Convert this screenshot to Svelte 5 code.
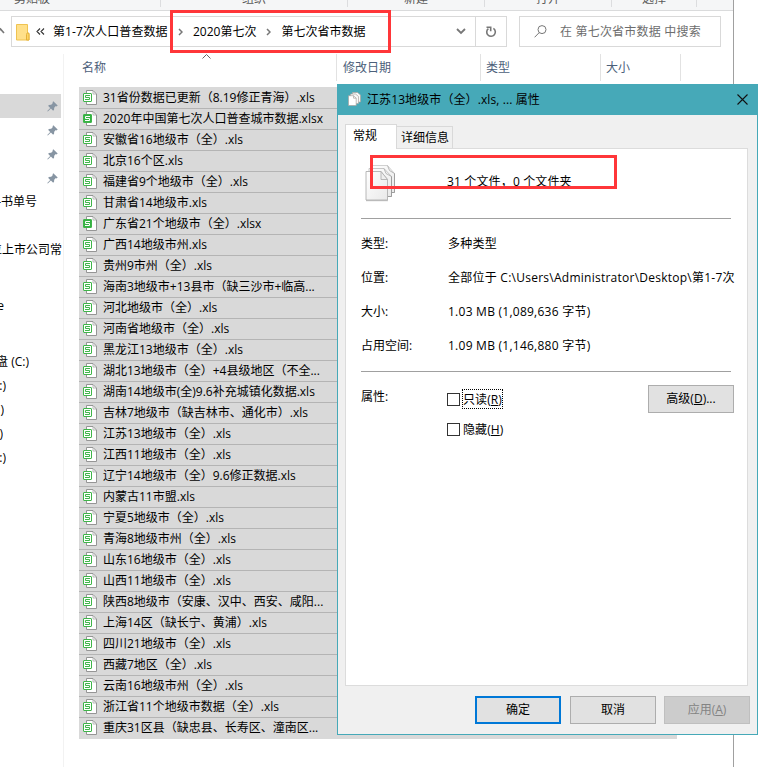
<script lang="ts">
  interface FileItem {
    name: string
    solid?: boolean
  }

  interface NavItem {
    text?: string
    end?: number
    pin?: boolean
    active?: boolean
  }

  const groups = [
    { label: '剪贴板', width: 161, shift: -96 },
    { label: '组织', width: 187, shift: 0 },
    { label: '新建', width: 137, shift: 0 },
    { label: '打开', width: 127, shift: 0 },
    { label: '选择', width: 85, shift: 0 },
  ]

  const navGroups: NavItem[][] = [
    [
      { pin: true, active: true },
      { pin: true },
      { pin: true },
      { pin: true },
      { text: '-书单号', end: 37 },
      {},
      { text: '位上市公司常', end: 62 },
      {},
    ],
    [{ text: 'e', end: 4 }, {}],
    [
      { text: '盘 (C:)', end: 29 },
      { text: ':)', end: 6 },
      { text: ')', end: 4 },
      { text: ')', end: 3 },
      { text: ':)', end: 6 },
    ],
  ]

  const files: FileItem[] = [
    { name: '31省份数据已更新（8.19修正青海）.xls' },
    { name: '2020年中国第七次人口普查城市数据.xlsx', solid: true },
    { name: '安徽省16地级市（全）.xls' },
    { name: '北京16个区.xls' },
    { name: '福建省9个地级市（全）.xls' },
    { name: '甘肃省14地级市.xls' },
    { name: '广东省21个地级市（全）.xlsx', solid: true },
    { name: '广西14地级市州.xls' },
    { name: '贵州9市州（全）.xls' },
    { name: '海南3地级市+13县市（缺三沙市+临高...' },
    { name: '河北地级市（全）.xls' },
    { name: '河南省地级市（全）.xls' },
    { name: '黑龙江13地级市（全）.xls' },
    { name: '湖北13地级市（全）+4县级地区（不全...' },
    { name: '湖南14地级市(全)9.6补充城镇化数据.xls' },
    { name: '吉林7地级市（缺吉林市、通化市）.xls' },
    { name: '江苏13地级市（全）.xls' },
    { name: '江西11地级市（全）.xls' },
    { name: '辽宁14地级市（全）9.6修正数据.xls' },
    { name: '内蒙古11市盟.xls' },
    { name: '宁夏5地级市（全）.xls' },
    { name: '青海8地级市州（全）.xls' },
    { name: '山东16地级市（全）.xls' },
    { name: '山西11地级市（全）.xls' },
    { name: '陕西8地级市（安康、汉中、西安、咸阳...' },
    { name: '上海14区（缺长宁、黄浦）.xls' },
    { name: '四川21地级市（全）.xls' },
    { name: '西藏7地区（全）.xls' },
    { name: '云南16地级市州（全）.xls' },
    { name: '浙江省11个地级市数据（全）.xls' },
    { name: '重庆31区县（缺忠县、长寿区、潼南区...' },
  ]

  const details = [
    { label: '类型:', value: '多种类型' },
    { label: '位置:', value: '全部位于 C:\\Users\\Administrator\\Desktop\\第1-7次' },
    { label: '大小:', value: '1.03 MB (1,089,636 字节)' },
    { label: '占用空间:', value: '1.09 MB (1,146,880 字节)' },
  ]
</script>

<div class="screen">
  <div class="explorer">
    <div class="ribbon">
      {#each groups as g (g.label)}
        <div class="ribbon-group" style="width: {g.width}px; padding-right: {-g.shift}px"><span>{g.label}</span></div>
      {/each}
    </div>

    <div class="toolbar">
      <svg class="up" width="5" height="8" viewBox="0 0 5 8"><path d="M-3 6 L0.5 2 L4 6" fill="none" stroke="#777" stroke-width="1.6" /></svg>
      <div class="address">
        <svg class="folder" width="14" height="18" viewBox="0 0 14 18">
          <path d="M0.5 1.5h11v8.5h1.5v7H0.5z" fill="#ffe08a" stroke="#efc351" />
          <path d="M10.5 17v-5.5q0-1.5 1.2-1.5t1.3 1.5V17z" fill="#ffd663" stroke="#e3b03b" />
        </svg>
        <svg class="back" width="9" height="7" viewBox="0 0 9 7"><path d="M4 0.5L1 3.5l3 3M8 0.5L5 3.5l3 3" fill="none" stroke="#333" stroke-width="1.1" /></svg>
        <span class="crumb first">第1-7次人口普查数据</span>
        <svg class="chev" width="5" height="8" viewBox="0 0 5 8"><path d="M1 1l3 3-3 3" fill="none" stroke="#777" stroke-width="1.5" /></svg>
        <span class="crumb">2020第七次</span>
        <svg class="chev last" width="5" height="8" viewBox="0 0 5 8"><path d="M1 1l3 3-3 3" fill="none" stroke="#777" stroke-width="1.5" /></svg>
        <span class="crumb">第七次省市数据</span>
        <svg class="drop" width="10" height="7" viewBox="0 0 10 7"><path d="M1 1l4 4 4-4" fill="none" stroke="#777" stroke-width="1.8" /></svg>
        <div class="refresh">
          <svg width="12" height="12" viewBox="0 0 12 12">
            <path d="M8.4 2.4A4.3 4.3 0 1 1 3.4 2.6" fill="none" stroke="#777" stroke-width="1.6" />
            <path d="M1.5 1.2h4.2v4" fill="none" stroke="#777" stroke-width="1.6" />
          </svg>
        </div>
      </div>
      <div class="search">
        <svg width="13" height="13" viewBox="0 0 13 13">
          <circle cx="8" cy="4.6" r="4" fill="none" stroke="#777" />
          <path d="M5.2 7.6L0.6 12.3" stroke="#777" />
        </svg>
        <span>在 第七次省市数据 中搜索</span>
      </div>
    </div>

    <div class="main">
      <div class="nav">
        {#each navGroups as group}
          <div class="nav-group">
            {#each group as item}
              <div class="nav-row" class:active={item.active}>
                {#if item.pin}
                  <svg class="pin" width="11" height="11" viewBox="0 0 11 11">
                    <path d="M6.3 0.2L10.7 4.6 9.6 5.4 8.8 5.1 7.2 6.8 7 9.3 5.9 9.6 3.9 7.5 0.8 10.6 0.3 10.1 3.2 6.9 1.3 4.9 1.7 3.9 4.2 3.7 5.9 2.1 5.5 1.3z" fill="#8795a3" />
                  </svg>
                {:else if item.text}
                  <span class="nav-text" style="width: {item.end}px">{item.text}</span>
                {/if}
              </div>
            {/each}
          </div>
        {/each}
      </div>

      <div class="content">
        <div class="columns">
          <div class="col name">名称</div>
          <div class="col date">修改日期</div>
          <div class="col type">类型</div>
          <div class="col size">大小</div>
          <svg class="sort" width="9" height="5" viewBox="0 0 9 5"><path d="M0.5 4.5l4-4 4 4" fill="none" stroke="#666" /></svg>
        </div>
        <div class="files">
          {#each files as f (f.name)}
            <div class="file">
              <svg width="14" height="15" viewBox="0 0 14 15">
                <path d="M3.5 0.5H10l3.5 3.5v10.5h-10z" fill="#fff" stroke="#959595" />
                <path d="M10 1v3h3" fill="none" stroke="#a8a8a8" stroke-width="0.8" />
                <rect x="0.5" y="3.5" width="8" height="8" rx="0.5" fill={f.solid ? '#35b243' : '#fff'} stroke="#3fb549" />
                <path d="M7 5.5H2.5v2h4v2H2" fill="none" stroke={f.solid ? '#fff' : '#3fb549'} />
              </svg>
              <span>{f.name}</span>
            </div>
          {/each}
        </div>
      </div>
    </div>
  </div>

  <div class="dialog">
    <div class="titlebar">
      <svg width="13" height="14" viewBox="0 0 13 14">
        <path d="M4.5 0.5h5l3 2.5v7h-8z" fill="#f7f7f7" stroke="#a9a39f" stroke-width="0.7" />
        <path d="M2.5 2h5l3 2.5v7h-8z" fill="#f7f7f7" stroke="#a9a39f" stroke-width="0.7" />
        <path d="M0.5 3.7h5l2.7 2.5v7.3H0.5z" fill="#fff" stroke="#a9a39f" stroke-width="0.7" />
        <path d="M5.5 3.7v2.5h2.7" fill="none" stroke="#a9a39f" stroke-width="0.7" />
      </svg>
      <span>江苏13地级市（全）.xls, ... 属性</span>
      <svg class="close" width="11" height="11" viewBox="0 0 11 11"><path d="M0.5 0.5l10 10M10.5 0.5l-10 10" stroke="#111" stroke-width="1.1" /></svg>
    </div>

    <div class="tabs">
      <div class="tab selected">常规</div>
      <div class="tab">详细信息</div>
    </div>

    <div class="page">
      <div class="summary">
        <svg width="32" height="38" viewBox="0 0 32 38">
          <defs>
            <linearGradient id="paper" x1="0" y1="0" x2="1" y2="1">
              <stop offset="0" stop-color="#fff" />
              <stop offset="1" stop-color="#e9e9e9" />
            </linearGradient>
          </defs>
          <g fill="url(#paper)" stroke="#b0b0b0" stroke-width="0.9">
            <path d="M7.5 1.5h15l7 8v19h-22z" stroke="#ccc" />
            <path d="M4 4.5h15l7.5 8v20H4z" stroke="#c0c0c0" />
            <path d="M1 7.5h15l6.5 8v20.5H1z" />
            <path d="M16 7.5v8h6.5z" fill="#eee" />
            <path d="M19 4.5l2 5 5.5 3M22.5 1.5l2 5 5 3" fill="none" />
            <path d="M26.5 12.5v20h-3.5M29.5 9.5v19h-3" fill="none" stroke="#999" />
          </g>
          <path d="M1 36.7h22" stroke="#999" opacity="0.6" />
        </svg>
        <span>31 个文件，0 个文件夹</span>
      </div>
      <div class="rule"></div>
      <div class="details">
        {#each details as d (d.label)}
          <div class="detail">
            <span class="label">{d.label}</span>
            <span class="value">{d.value}</span>
          </div>
        {/each}
      </div>
      <div class="rule"></div>
      <div class="attributes">
        <span class="label">属性:</span>
        <div class="checks">
          <div class="check"><i></i><span class="focus">只读(<u>R</u>)</span></div>
          <div class="check"><i></i><span>隐藏(<u>H</u>)</span></div>
        </div>
        <button>高级(<u>D</u>)...</button>
      </div>
    </div>

    <div class="actions">
      <button class="default">确定</button>
      <button>取消</button>
      <button disabled>应用(<u>A</u>)</button>
    </div>
  </div>

  <div class="mark path"></div>
  <div class="mark count"></div>
</div>

<style>
  :global(body) {
    background: #fff;
    overflow: hidden;
  }
  .screen {
    position: relative;
    width: 762px;
    height: 767px;
    overflow: hidden;
    font: 12px/16px "Open Sans", "Noto Sans CJK SC", sans-serif;
    color: #000;
    white-space: nowrap;
    text-spacing-trim: space-all;
  }
  .screen * {
    box-sizing: border-box;
  }
  svg {
    display: block;
    flex-shrink: 0;
  }
  .explorer {
    display: flex;
    flex-direction: column;
    width: 734px;
    height: 767px;
    border-right: 1px solid #a0a0a0;
  }

  .ribbon {
    display: flex;
    height: 11px;
    background: #f5f6f7;
    border-bottom: 1px solid #dadbdc;
    overflow: hidden;
  }
  .ribbon-group {
    display: flex;
    justify-content: center;
    height: 7px;
    border-right: 1px solid #dcdddf;
    color: #5a5a5a;
  }
  .ribbon-group span {
    margin-top: -9px;
  }

  .toolbar {
    display: flex;
    height: 43px;
    padding-top: 5px;
  }
  .up {
    margin: 11px 6px 0 0;
  }
  .address {
    display: flex;
    align-items: center;
    width: 496px;
    height: 31px;
    border: 1px solid #d9d9d9;
  }
  .folder {
    margin-left: 4px;
  }
  .back {
    margin-left: 6px;
  }
  .crumb {
    margin-left: 10px;
  }
  .crumb.first {
    width: 116px;
    margin-left: 8px;
    letter-spacing: 0.1px;
  }
  .chev {
    margin-left: 9px;
  }
  .chev.last {
    margin-left: 10px;
  }
  .drop {
    margin-left: auto;
    margin-right: 9px;
  }
  .refresh {
    display: flex;
    align-items: center;
    justify-content: center;
    width: 31px;
    height: 29px;
    border-left: 1px solid #d9d9d9;
  }
  .search {
    display: flex;
    align-items: center;
    gap: 13px;
    width: 202px;
    height: 31px;
    margin-left: 12px;
    padding-left: 14px;
    border: 1px solid #d9d9d9;
    color: #6d6d6d;
    letter-spacing: 0.2px;
  }

  .main {
    display: flex;
    flex: 1;
  }
  .nav {
    display: flex;
    flex-direction: column;
    gap: 8px;
    width: 64px;
    padding-top: 40px;
    border-right: 1px solid #f2f2f2;
  }
  .nav-row {
    display: flex;
    align-items: center;
    width: 61px;
    height: 24px;
  }
  .nav-row.active {
    background: #d9d9d9;
  }
  .pin {
    margin-left: auto;
    margin-right: 3px;
  }
  .nav-text {
    display: flex;
    flex-shrink: 0;
    justify-content: flex-end;
    overflow: hidden;
  }

  .columns {
    position: relative;
    display: flex;
    height: 26px;
    color: #4c607a;
  }
  .col {
    height: 27px;
    line-height: 27px;
    padding-left: 5px;
    border-right: 1px solid #e2e2e2;
  }
  .col.name {
    width: 273px;
    padding-left: 18px;
  }
  .col.date {
    width: 144px;
    padding-left: 6px;
  }
  .col.type {
    width: 120px;
  }
  .col.size {
    width: 80px;
  }
  .sort {
    position: absolute;
    left: 138px;
    top: 0;
  }
  .files {
    width: 598px;
    margin: 7px 0 0 15px;
    padding-top: 1px;
    background: #d9d9d9;
  }
  .file {
    display: flex;
    align-items: center;
    gap: 6px;
    height: 21px;
    padding-left: 4px;
    padding-bottom: 1px;
    border-bottom: 1px solid #b4b4b4;
  }
  .file span {
    margin-top: 1px;
  }
  .file:last-child {
    border-bottom-color: #d9d9d9;
  }

  .dialog {
    position: absolute;
    left: 337px;
    top: 84px;
    display: flex;
    flex-direction: column;
    width: 421px;
    height: 651px;
    background: #f0f0f0;
    border: 1px solid #46a9b8;
  }
  .titlebar {
    display: flex;
    align-items: center;
    gap: 6px;
    height: 30px;
    padding: 0 9px 2px 10px;
    background: #46a9b8;
  }
  .titlebar span {
    margin-top: 2px;
    letter-spacing: 0.1px;
  }
  .close {
    margin-left: auto;
  }
  .tabs {
    display: flex;
    align-items: flex-end;
    height: 33px;
    padding-left: 7px;
  }
  .tab {
    height: 22px;
    padding: 3px 3px 0 4px;
    border: 1px solid #d9d9d9;
    border-width: 1px 1px 0 0;
  }
  .tab.selected {
    z-index: 1;
    width: 52px;
    height: 25px;
    margin-bottom: -1px;
    padding: 3px 0 0 7px;
    background: #fff;
    border-width: 1px 1px 0 1px;
  }
  .page {
    display: flex;
    flex-direction: column;
    width: 403px;
    height: 538px;
    margin-left: 7px;
    padding: 0 12px 0 15px;
    background: #fff;
    border: 1px solid #dcdcdc;
    overflow: hidden;
  }
  .summary {
    display: flex;
    align-items: flex-start;
    height: 69px;
    padding: 15px 0 0 4px;
  }
  .summary span {
    margin: 10px 0 0 50px;
    letter-spacing: 0.15px;
  }
  .rule {
    width: 370px;
    height: 1px;
    background: #a0a0a0;
    flex-shrink: 0;
  }
  .details {
    display: flex;
    flex-direction: column;
    gap: 18px;
    height: 152px;
    padding-top: 17px;
  }
  .detail {
    display: flex;
  }
  .label {
    width: 87px;
    flex-shrink: 0;
  }
  .value {
    letter-spacing: 0.25px;
  }
  .attributes {
    display: flex;
    align-items: flex-start;
    padding-top: 13px;
  }
  .attributes .label {
    width: 86px;
    margin-top: 4px;
  }
  .checks {
    display: flex;
    flex-direction: column;
    gap: 10px;
    padding-top: 4px;
  }
  .check {
    display: flex;
    align-items: center;
    gap: 2px;
    height: 20px;
  }
  .check i {
    width: 13px;
    height: 13px;
    background: #fff;
    border: 1px solid #333;
  }
  .check span {
    height: 20px;
    padding-top: 2px;
    border: 1px dotted transparent;
    letter-spacing: 0.1px;
  }
  .check .focus {
    border-color: #000;
  }
  button {
    width: 86px;
    height: 28px;
    padding: 0;
    background: #e1e1e1;
    border: 1px solid #adadad;
    border-radius: 0;
    font: inherit;
    color: #000;
  }
  .attributes button {
    margin-left: auto;
    margin-right: 1px;
  }
  .actions {
    display: flex;
    justify-content: flex-end;
    gap: 8px;
    padding: 10px 7px 0 0;
  }
  .actions .default {
    margin-right: 1px;
    border: 2px solid #0078d7;
  }
  button:disabled {
    background: #ccc;
    border-color: #bfbfbf;
    color: #838383;
  }

  .mark {
    position: absolute;
    border: 3px solid #ff3639;
  }
  .mark.path {
    left: 170px;
    top: 10px;
    width: 221px;
    height: 43px;
  }
  .mark.count {
    left: 370px;
    top: 155px;
    width: 247px;
    height: 34px;
  }
</style>
